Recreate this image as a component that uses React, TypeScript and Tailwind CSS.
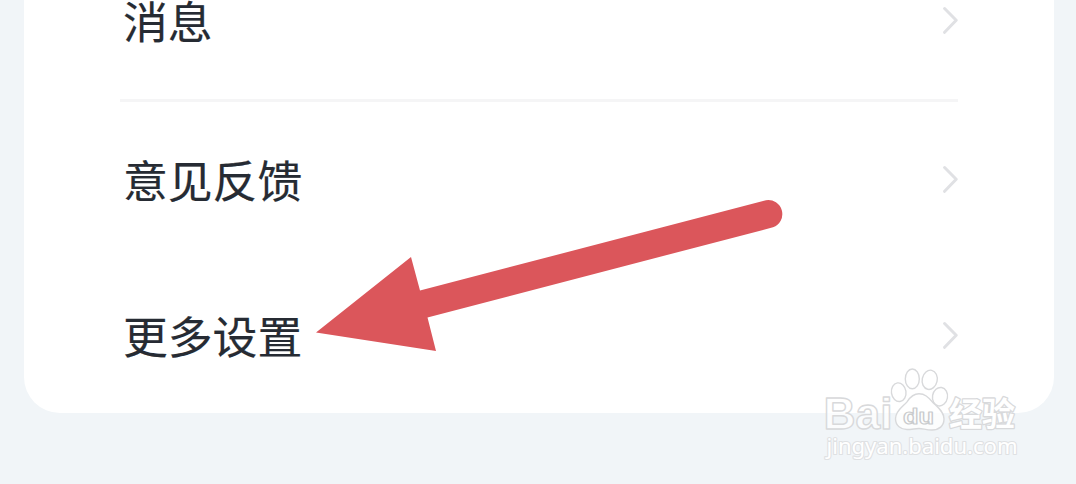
const Chevron = () => (
  <svg width="20" height="30" viewBox="0 0 20 30" fill="none" className="shrink-0">
    <path d="M6.600 2.500 18.200 14.300 6.600 26.300" stroke="#e0e1e4" strokeWidth="3" strokeLinecap="round" strokeLinejoin="round" />
  </svg>
);

const Row = ({ label }: { label: string }) => (
  <div className="flex h-[156px] items-center justify-between">
    <span className="pb-[3px] pl-[3px] text-[44.8px] leading-[60px] text-[#262b33] [-webkit-text-stroke:0.2px_#262b33]">
      {label}
    </span>
    <Chevron />
  </div>
);

const Arrow = () => (
  <svg className="absolute left-[300px] top-[190px]" width="500" height="170" viewBox="300 190 500 170">
    <path
      d="M316 332.5 411 257 420 290.5 766 200.3A14 14 0 0 1 773 227.3L427.5 317.5 436 351Z"
      fill="#db565b"
    />
  </svg>
);

const Watermark = () => (
  <svg className="absolute left-[810px] top-[355px]" width="230" height="120" viewBox="0 0 230 120">
    <g fill="#fff" fillOpacity="0.75" stroke="#d8d9db" strokeWidth="1.4" strokeLinejoin="round">
      <ellipse cx="88.7" cy="37.2" rx="7.300" ry="9.400" transform="rotate(-8 88.7 37.2)" />
      <ellipse cx="102.3" cy="23.9" rx="7" ry="9.900" />
      <ellipse cx="119.7" cy="24.8" rx="7.5" ry="9.7" transform="rotate(12 119.7 24.8)" />
      <ellipse cx="130" cy="41.7" rx="7.5" ry="9.3" transform="rotate(10 130 41.7)" />
      <path d="M109 38.8c-6 0-9 3.500-12 8-3 4.200-11.500 8.500-11.500 17 0 7 5.500 10.700 11.500 10.700 5 0 8-1 12-1s7 1.500 13 1.500c7 0 12-4 12-11 0-8-8-13-12-17.500-4-4.500-7-7.700-13-7.700Z" />
      <g fontWeight="700">
        <text x="13.500" y="73.500" fontSize="45" fontFamily='"Liberation Sans", Arial, sans-serif' textLength="69" lengthAdjust="spacingAndGlyphs">
          Bai
        </text>
        <text x="93" y="69" fontSize="22" fontFamily='"Liberation Sans", Arial, sans-serif' stroke="#c9cbcd" strokeWidth="1.200" textLength="31" lengthAdjust="spacingAndGlyphs">
          du
        </text>
        <text x="139" y="71" fontSize="33" fontFamily='"Noto Sans CJK SC", sans-serif' fillOpacity="1" paintOrder="stroke" strokeWidth="2.600" textLength="66" lengthAdjust="spacingAndGlyphs">
          经验
        </text>
      </g>
      <text
        x="16.500"
        y="99"
        fontSize="22"
        fontFamily='"Noto Sans", sans-serif'
        fillOpacity="1"
        paintOrder="stroke"
        strokeWidth="2.200"
        stroke="#dfe1e3"
        textLength="191"
        lengthAdjust="spacingAndGlyphs"
      >
        jingyan.baidu.com
      </text>
    </g>
  </svg>
);

export default function App() {
  return (
    <main
      lang="zh-CN"
      className="relative h-[484px] w-[1076px] overflow-hidden bg-[#f1f5f8] font-['Noto_Sans_CJK_SC',sans-serif]"
    >
      <section className="-mt-[57px] mr-[22px] ml-[24px] h-[470px] overflow-hidden rounded-b-[36px] bg-white pr-[96px] pl-[96px]">
        <Row label="消息" />
        <div className="h-[3px] bg-[#f5f5f6]" />
        <Row label="意见反馈" />
        <Row label="更多设置" />
      </section>
      <Arrow />
      <Watermark />
    </main>
  );
}
